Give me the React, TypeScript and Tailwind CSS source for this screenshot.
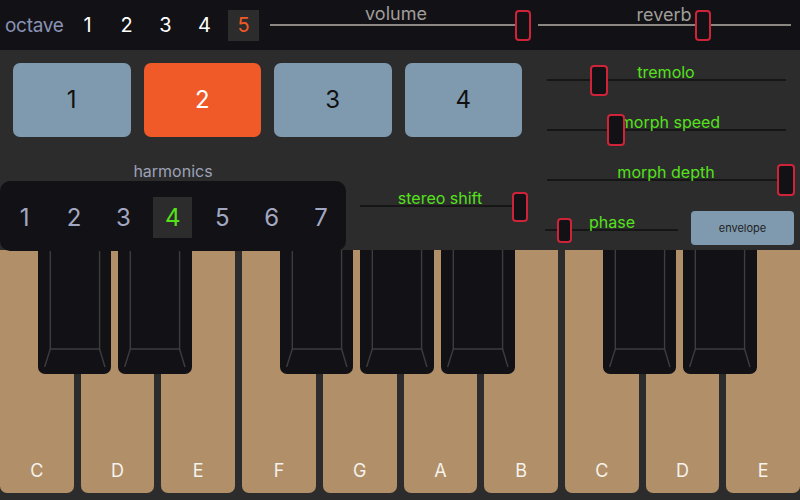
import React from "react";

type SliderProps = {
  w: number;
  h: number;
  trackY: number;
  trackLeft?: number;
  trackRight?: number;
  trackClass: string;
  thumbX: number;
  thumbY: number;
  thumbW: number;
  thumbH: number;
  label: string;
  labelCenter: number;
  labelY: number;
  labelClass: string;
};

function Slider(p: SliderProps) {
  return (
    <div className="relative shrink-0" style={{ width: p.w, height: p.h }}>
      <div
        className={`absolute ${p.trackClass}`}
        style={{ top: p.trackY - 1, left: p.trackLeft ?? 0, right: p.trackRight ?? 0 }}
      />
      <div
        className={`absolute whitespace-nowrap leading-none -translate-x-1/2 -translate-y-1/2 ${p.labelClass}`}
        style={{ left: p.labelCenter, top: p.labelY }}
      >
        {p.label}
      </div>
      <div
        className="absolute rounded-[4px] border-2 border-[#cf2339] bg-[#121115]"
        style={{ left: p.thumbX, top: p.thumbY, width: p.thumbW, height: p.thumbH }}
      />
    </div>
  );
}

const whiteKeys = ["C", "D", "E", "F", "G", "A", "B", "C", "D", "E"];
const blackSlots = [true, true, false, true, true, true, false, true, true, false];

function BlackKey() {
  return (
    <div className="relative h-[124px] w-[73.7px] shrink-0 rounded-b-[7px] bg-[#121115]">
      <svg className="absolute inset-0" width="73.7" height="124" viewBox="0 0 73.7 124">
        <g stroke="#3d3d40" strokeWidth="1.4" fill="none">
          <path d="M12.3 0 V99 H61.6 V0" />
          <path d="M12.3 99 L6.6 117" />
          <path d="M61.6 99 L67 117" />
        </g>
      </svg>
    </div>
  );
}

export default function App() {
  const font = { fontFamily: "Inter, 'Noto Sans', sans-serif" };
  return (
    <div className="w-[800px] h-[500px] overflow-hidden bg-[#2c2c2c]" style={font}>
      {/* top bar */}
      <div className="flex h-[50px] items-center bg-[#121115]">
        <div className="w-[72px] shrink-0 whitespace-nowrap pl-[5px] text-[19px] leading-none tracking-[-0.3px] text-[#8a93b5]">
          octave
        </div>
        <div className="flex gap-[8px]">
          {[1, 2, 3, 4, 5].map((n) => (
            <div
              key={n}
              className={`flex h-[31px] w-[31px] items-center justify-center text-[20px] leading-none ${
                n === 5 ? "bg-[#2c2c2c] text-[#f05a28]" : "text-white"
              }`}
            >
              {n}
            </div>
          ))}
        </div>
        <div className="ml-[11px] flex">
          <Slider
            w={261}
            h={50}
            trackY={25}
            trackRight={1}
            trackClass="h-[2px] bg-[#8b8884]"
            thumbX={245}
            thumbY={10}
            thumbW={16}
            thumbH={31}
            label="volume"
            labelCenter={126}
            labelY={14}
            labelClass="text-[18px] text-[#a09d99]"
          />
          <div className="w-[7px]" />
          <Slider
            w={253}
            h={50}
            trackY={25}
            trackClass="h-[2px] bg-[#8b8884]"
            thumbX={157}
            thumbY={10}
            thumbW={16}
            thumbH={31}
            label="reverb"
            labelCenter={126}
            labelY={15}
            labelClass="text-[18px] text-[#a09d99]"
          />
        </div>
      </div>

      {/* control panel */}
      <div className="relative z-10 flex h-[200px] bg-[#2c2c2c]">
        <div className="flex w-[545px] flex-col">
          <div className="flex gap-[13px] pl-[13px] pt-[13px]">
            {[1, 2, 3, 4].map((n) => (
              <div
                key={n}
                className={`flex h-[74px] w-[117.5px] items-center justify-center rounded-[7px] text-[24px] ${
                  n === 2 ? "bg-[#f05a28] text-white" : "bg-[#7f9aae] text-[#111]"
                }`}
              >
                {n}
              </div>
            ))}
          </div>
          <div className="mt-[25px] flex items-end">
            <div className="flex w-[346px] flex-col items-center">
              <div className="h-[19px] text-[16px] leading-[19px] text-[#9da2b8]">harmonics</div>
              <div className="flex h-[70px] w-[346px] items-center rounded-[10px] bg-[#121115] pt-[3px]">
                {[1, 2, 3, 4, 5, 6, 7].map((n) => (
                  <div key={n} className="flex w-[49.4px] justify-center">
                    <div
                      className={`flex h-[41px] w-[39px] items-center justify-center text-[24px] ${
                        n === 4 ? "bg-[#2c2c2c] text-[#55e21c]" : "text-[#a2a8c2]"
                      }`}
                    >
                      {n}
                    </div>
                  </div>
                ))}
              </div>
            </div>
            <div className="ml-[14px]">
              <Slider
                w={168}
                h={70}
                trackY={25}
                trackClass="h-[2px] bg-[#161616]"
                thumbX={152}
                thumbY={11}
                thumbW={16}
                thumbH={30}
                label="stereo shift"
                labelCenter={80}
                labelY={17}
                labelClass="text-[16px] text-[#55e21c]"
              />
            </div>
          </div>
        </div>

        <div className="flex w-[255px] flex-col">
          <Slider
            w={241}
            h={50}
            trackY={30}
            trackLeft={2}
            trackClass="h-[2px] bg-[#161616]"
            thumbX={45}
            thumbY={15}
            thumbW={18}
            thumbH={31}
            label="tremolo"
            labelCenter={121}
            labelY={22}
            labelClass="text-[16px] text-[#55e21c]"
          />
          <Slider
            w={241}
            h={50}
            trackY={30}
            trackLeft={2}
            trackClass="h-[2px] bg-[#161616]"
            thumbX={62}
            thumbY={14}
            thumbW={18}
            thumbH={32}
            label="morph speed"
            labelCenter={125}
            labelY={22}
            labelClass="text-[16px] text-[#55e21c]"
          />
          <Slider
            w={250}
            h={50}
            trackY={30}
            trackLeft={2}
            trackRight={9}
            trackClass="h-[2px] bg-[#161616]"
            thumbX={232}
            thumbY={14}
            thumbW={18}
            thumbH={32}
            label="morph depth"
            labelCenter={121}
            labelY={22}
            labelClass="text-[16px] text-[#55e21c]"
          />
          <div className="flex h-[50px]">
            <Slider
              w={133}
              h={50}
              trackY={30}
              trackClass="h-[2px] bg-[#161616]"
              thumbX={12}
              thumbY={18}
              thumbW={15}
              thumbH={25}
              label="phase"
              labelCenter={67}
              labelY={22}
              labelClass="text-[16px] text-[#55e21c]"
            />
            <div className="ml-[13px] mt-[11px] flex h-[34px] w-[103px] items-center justify-center rounded-[4px] bg-[#7f9aae] text-[11px] text-[#1e1e1e]">
              envelope
            </div>
          </div>
        </div>
      </div>

      {/* keyboard */}
      <div className="relative h-[250px]">
        <div className="flex h-[243px] gap-[7px]">
          {whiteKeys.map((k, i) => (
            <div
              key={i}
              className="flex flex-1 items-end justify-center rounded-b-[7px] bg-[#b08f69] pb-[11px] text-[18px] leading-[22px] text-[#f6f2ec]"
            >
              {k}
            </div>
          ))}
        </div>
        <div className="absolute left-[37.7px] top-0 flex gap-[7px]">
          {blackSlots.map((b, i) =>
            b ? <BlackKey key={i} /> : <div key={i} className="w-[73.7px] shrink-0" />
          )}
        </div>
      </div>
    </div>
  );
}
